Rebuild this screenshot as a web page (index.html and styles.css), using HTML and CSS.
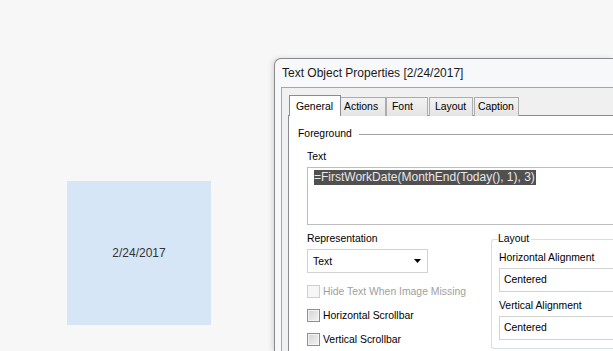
FILE: index.html
```html
<!DOCTYPE html>
<html>
<head>
<meta charset="utf-8">
<title>Text Object Properties</title>
<link rel="stylesheet" href="styles.css">
</head>
<body>
<div class="sheet">
  <div class="text-object">2/24/2017</div>

  <div class="dialog">
    <div class="title">Text Object Properties [2/24/2017]</div>
    <div class="client">
      <div class="tabs">
        <div class="tab tab-general active">General</div>
        <div class="tab tab-actions">Actions</div>
        <div class="tab tab-font">Font</div>
        <div class="tab tab-layout">Layout</div>
        <div class="tab tab-caption">Caption</div>
      </div>
      <div class="page">
        <div class="group-head">
          <span class="group-title">Foreground</span>
          <span class="group-line"></span>
        </div>
        <div class="indent">
          <div class="label">Text</div>
          <div class="textarea"><span class="selection">=FirstWorkDate(MonthEnd(Today(), 1), 3)</span></div>

          <div class="lower">
            <div class="left-col">
              <div class="label">Representation</div>
              <div class="select">
                <span>Text</span>
                <svg class="arrow" width="7" height="4" viewBox="0 0 7 4"><path d="M0 0H7L3.5 4Z" fill="#000"/></svg>
              </div>
              <div class="checks">
                <label class="check disabled"><span class="box"></span>Hide Text When Image Missing</label>
                <label class="check"><span class="box"></span>Horizontal Scrollbar</label>
                <label class="check"><span class="box"></span>Vertical Scrollbar</label>
              </div>
            </div>
            <fieldset class="layout-group">
              <legend>Layout</legend>
              <div class="label first">Horizontal Alignment</div>
              <div class="field">Centered</div>
              <div class="label second">Vertical Alignment</div>
              <div class="field">Centered</div>
            </fieldset>
          </div>
        </div>
      </div>
    </div>
  </div>
</div>
</body>
</html>
```

FILE: styles.css
```css
html, body {
  margin: 0;
  padding: 0;
  width: 613px;
  height: 351px;
  overflow: hidden;
  background: #f7f7f7;
  font-family: "Liberation Sans", Arial, sans-serif;
}

.sheet {
  position: relative;
  width: 613px;
  height: 351px;
  overflow: hidden;
}

.text-object {
  position: absolute;
  left: 67px;
  top: 181px;
  width: 144px;
  height: 144px;
  background: #d6e6f6;
  color: #333;
  font-size: 12px;
  display: flex;
  align-items: center;
  justify-content: center;
}

.dialog {
  position: absolute;
  left: 274px;
  top: 58px;
  width: 339px;
  height: 293px;
  box-sizing: border-box;
  border: 1px solid #8a8a8a;
  border-right: none;
  border-bottom: none;
  border-radius: 7px 0 0 0;
  background: #f6f8fa;
  box-shadow: -2px 0 5px rgba(0, 0, 0, 0.12);
  padding-left: 6px;
  display: flex;
  flex-direction: column;
  overflow: hidden;
}

.title {
  height: 28px;
  line-height: 28px;
  padding-left: 1px;
  font-size: 12px;
  color: #1a1a1a;
  white-space: nowrap;
}

.client {
  flex: 1;
  min-height: 0;
  border: 1px solid #a6a6a6;
  border-right: none;
  border-bottom: none;
  background: #f0f0f0;
  padding: 7px 0 0 6px;
  display: flex;
  flex-direction: column;
}

.tabs {
  display: flex;
  align-items: flex-end;
  height: 21px;
  padding-left: 1px;
  margin-bottom: -1px;
  position: relative;
  z-index: 1;
  flex-shrink: 0;
}

.tab {
  box-sizing: border-box;
  height: 19px;
  border: 1px solid #acacac;
  border-bottom: none;
  background: linear-gradient(#f2f2f2, #e4e4e4);
  font-size: 10.4px;
  line-height: 18px;
  color: #000;
  white-space: nowrap;
  overflow: hidden;
}

.tab.active {
  height: 21px;
  background: #fff;
  border-color: #898c95;
  line-height: 21px;
}

.tab-general { width: 52px; padding-left: 6px; }
.tab-actions { width: 45px; padding-left: 3px; border-left: none; }
.tab-font { width: 42px; padding-left: 5px; }
.tab-layout { width: 44px; padding-left: 5px; margin-left: 1px; }
.tab-caption { width: 45px; padding-left: 3px; margin-left: 1px; }

.page {
  flex: 1;
  min-height: 0;
  background: #fff;
  border: 1px solid #898c95;
  border-right: none;
  border-bottom: none;
  padding-top: 11px;
  font-size: 10.4px;
  color: #000;
}

.group-head {
  display: flex;
  align-items: center;
  height: 14px;
  padding-left: 9px;
}

.group-title {
  line-height: 14px;
}

.group-line {
  flex: 1;
  height: 1px;
  margin-left: 7px;
  background: #a0a0a0;
}

.indent {
  padding-left: 18px;
}

.label {
  line-height: 14px;
  height: 14px;
  white-space: nowrap;
}

.indent > .label {
  margin-top: 9px;
}

.textarea {
  margin-top: 3px;
  height: 58px;
  box-sizing: border-box;
  border: 1px solid #bdbdbd;
  border-right: none;
  padding: 2px 0 0 6px;
  white-space: nowrap;
}

.selection {
  display: inline-block;
  background: #505050;
  color: #e8e8e8;
  font-size: 12px;
  line-height: 15px;
  height: 15px;
  padding-right: 1px;
}

.lower {
  display: grid;
  grid-template-columns: 184px 1fr;
  margin-top: 7px;
}

.select {
  margin-top: 3px;
  width: 121px;
  height: 24px;
  box-sizing: border-box;
  border: 1px solid #d2d2d2;
  display: flex;
  align-items: center;
  justify-content: space-between;
  padding: 0 6px 0 5px;
  font-size: 10.4px;
}

.arrow {
  display: block;
}

.checks {
  margin-top: 11px;
  display: flex;
  flex-direction: column;
  gap: 10px;
}

.check {
  display: flex;
  align-items: center;
  height: 14px;
  gap: 3px;
  white-space: nowrap;
}

.box {
  width: 13px;
  height: 13px;
  box-sizing: border-box;
  border: 1px solid #8f8f8f;
  background: linear-gradient(135deg, #d2d2d2, #f4f4f4);
  box-shadow: inset 0 0 0 1px #f4f4f4;
}

.check.disabled {
  color: #a0a0a0;
}

.check.disabled .box {
  border-color: #cfcfcf;
  background: #f6f6f6;
  box-shadow: none;
}

.layout-group {
  margin: 0;
  border: 1px solid #d5dfe5;
  border-right: none;
  border-radius: 3px 0 0 3px;
  padding: 5px 0 8px 7px;
  min-width: 0;
}

.layout-group legend {
  padding: 0 2px 0 0;
  margin-left: -1px;
  line-height: 14px;
  height: 14px;
}

.layout-group .label.second {
  margin-top: 7px;
}

.field {
  margin-top: 3px;
  height: 24px;
  box-sizing: border-box;
  border: 1px solid #d2d2d2;
  border-right: none;
  padding-left: 4px;
  line-height: 22px;
}
```
